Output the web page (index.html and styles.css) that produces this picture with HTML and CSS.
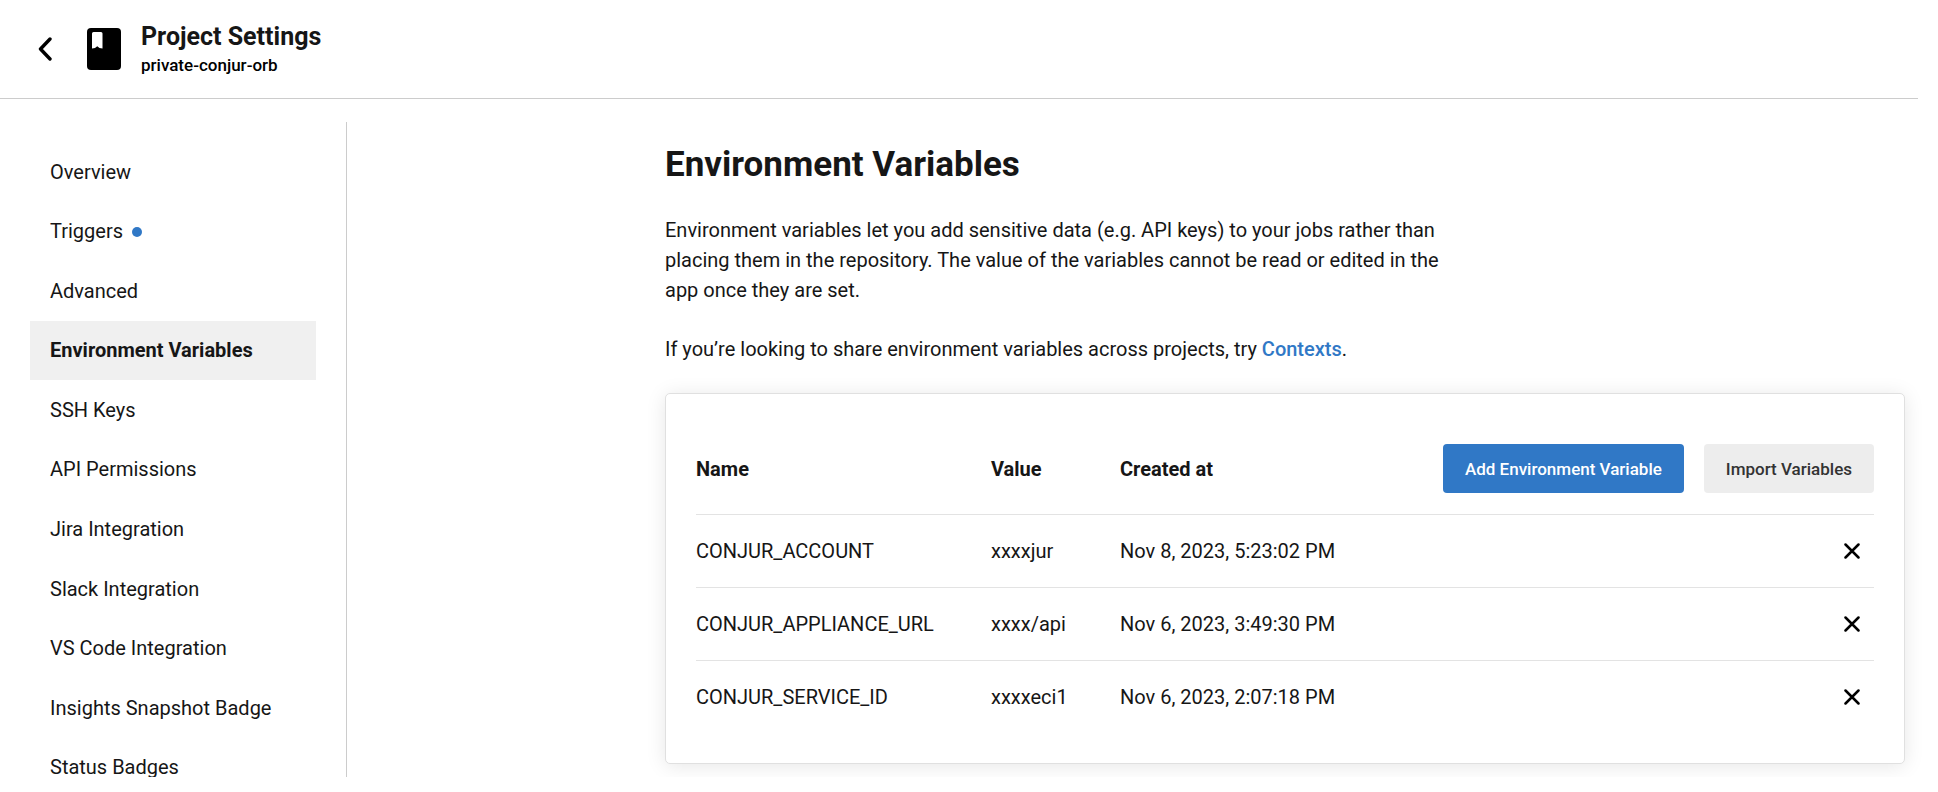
FILE: index.html
```html
<!DOCTYPE html>
<html lang="en">
<head>
<meta charset="utf-8">
<title>Project Settings</title>
<link rel="stylesheet" href="styles.css">
</head>
<body>
<div class="app">
  <header class="header">
    <button class="back" type="button" aria-label="Back">
      <svg viewBox="0 0 14 24" width="14" height="24" aria-hidden="true"><path d="M12 2 2.500 12 12 22" fill="none" stroke="currentColor" stroke-width="3.400" stroke-linecap="round" stroke-linejoin="round"/></svg>
    </button>
    <svg class="book" viewBox="0 0 34 42" width="34" height="42" aria-hidden="true"><rect width="34" height="42" rx="4"/><path d="M6.500 4H14q1.500 0 1.500 1.500V20.500L12.500 20 10.250 18.200 8 20 5 20.500V5.500Q5 4 6.500 4z" fill="#fff"/></svg>
    <div class="titles">
      <h1 class="title">Project Settings</h1>
      <p class="project">private-conjur-orb</p>
    </div>
  </header>
  <div class="body">
    <nav class="sidebar" aria-label="Project settings">
      <ul class="nav">
        <li><a class="nav-link" href="#">Overview</a></li>
        <li><a class="nav-link" href="#">Triggers<span class="dot"></span></a></li>
        <li><a class="nav-link" href="#">Advanced</a></li>
        <li><a class="nav-link nav-link-active" href="#" aria-current="page">Environment Variables</a></li>
        <li><a class="nav-link" href="#">SSH Keys</a></li>
        <li><a class="nav-link" href="#">API Permissions</a></li>
        <li><a class="nav-link" href="#">Jira Integration</a></li>
        <li><a class="nav-link" href="#">Slack Integration</a></li>
        <li><a class="nav-link" href="#">VS Code Integration</a></li>
        <li><a class="nav-link" href="#">Insights Snapshot Badge</a></li>
        <li><a class="nav-link" href="#">Status Badges</a></li>
      </ul>
    </nav>
    <main class="main">
      <h2 class="heading">Environment Variables</h2>
      <p class="text">Environment variables let you add sensitive data (e.g. API keys) to your jobs rather than placing them in the repository. The value of the variables cannot be read or edited in the app once they are set.</p>
      <p class="text">If you’re looking to share environment variables across projects, try <a class="link" href="#">Contexts</a>.</p>
      <section class="card">
        <table class="table">
          <colgroup><col class="col-name"><col class="col-value"><col><col class="col-actions"></colgroup>
          <thead>
            <tr>
              <th scope="col">Name</th>
              <th scope="col">Value</th>
              <th scope="col">Created at</th>
              <td><div class="actions"><button class="btn btn-primary" type="button">Add Environment Variable</button><button class="btn btn-secondary" type="button">Import Variables</button></div></td>
            </tr>
          </thead>
          <tbody>
            <tr><td>CONJUR_ACCOUNT</td><td>xxxxjur</td><td>Nov 8, 2023, 5:23:02 PM</td><td><button class="remove" type="button" aria-label="Remove CONJUR_ACCOUNT"><svg viewBox="0 0 16 16" width="16" height="16" aria-hidden="true"><path d="M1.500 1.500 14.500 14.500M14.500 1.500 1.500 14.500"/></svg></button></td></tr>
            <tr><td>CONJUR_APPLIANCE_URL</td><td>xxxx/api</td><td>Nov 6, 2023, 3:49:30 PM</td><td><button class="remove" type="button" aria-label="Remove CONJUR_APPLIANCE_URL"><svg viewBox="0 0 16 16" width="16" height="16" aria-hidden="true"><path d="M1.500 1.500 14.500 14.500M14.500 1.500 1.500 14.500"/></svg></button></td></tr>
            <tr><td>CONJUR_SERVICE_ID</td><td>xxxxeci1</td><td>Nov 6, 2023, 2:07:18 PM</td><td><button class="remove" type="button" aria-label="Remove CONJUR_SERVICE_ID"><svg viewBox="0 0 16 16" width="16" height="16" aria-hidden="true"><path d="M1.500 1.500 14.500 14.500M14.500 1.500 1.500 14.500"/></svg></button></td></tr>
          </tbody>
        </table>
      </section>
    </main>
  </div>
</div>
</body>
</html>
```
FILE: styles.css
```css
* {
  box-sizing: border-box;
}

body {
  margin: 0;
  background: #fff;
  color: #161616;
  font-family: Roboto, "Liberation Sans", sans-serif;
  font-size: 20px;
  line-height: 30px;
}

h1, h2, p, ul {
  margin: 0;
  padding: 0;
}

button {
  border: 0;
  background: none;
  font-family: inherit;
  cursor: pointer;
}

.app {
  display: flex;
  flex-direction: column;
  height: calc(100vh - 15px);
  margin-right: 20px;
}

.header {
  display: flex;
  align-items: center;
  flex: none;
  padding: 20px 32px;
  border-bottom: 1px solid #ccc;
}

.back {
  display: flex;
  padding: 0 6px;
  color: #000;
}

.book {
  margin-left: 29px;
}

.titles {
  margin-left: 20px;
  padding-top: 2px;
}

.title {
  font-size: 25px;
  line-height: 30px;
  font-weight: 700;
}

.project {
  color: #000;
  font-size: 17px;
  line-height: 26px;
  font-weight: 500;
}

.body {
  display: flex;
  flex: 1;
  min-height: 0;
  padding-top: 23px;
}

.sidebar {
  flex: none;
  width: 347px;
  padding: 20px 30px 0;
  border-right: 1px solid #ccc;
  overflow: hidden;
}

.nav {
  display: grid;
  grid-auto-rows: 1fr;
  min-height: 655px;
  list-style: none;
}

.nav-link {
  display: flex;
  align-items: center;
  height: 100%;
  padding: 0 20px;
  color: inherit;
  text-decoration: none;
}

.nav-link-active {
  background: #f0f0f0;
  font-weight: 700;
}

.dot {
  width: 10px;
  height: 10px;
  margin-top: 2px;
  margin-left: 9px;
  border-radius: 50%;
  background: #3078c6;
}

.main {
  flex: 1;
  padding: 20px 0 0 318px;
}

.heading {
  margin-bottom: 28px;
  font-size: 35px;
  line-height: 45px;
  font-weight: 700;
}

.text {
  max-width: 800px;
  margin-bottom: 29px;
}

.link {
  color: #3078c6;
  font-weight: 500;
  text-decoration: none;
}

.card {
  margin-right: 13px;
  padding: 30px;
  border: 1px solid #e0e0e0;
  border-radius: 5px;
  background: #fff;
  box-shadow: 0 2px 20px rgba(0, 0, 0, 0.1);
}

.table {
  width: 100%;
  border-collapse: collapse;
  table-layout: fixed;
}

.col-name {
  width: 295px;
}

.col-value {
  width: 129px;
}

.col-actions {
  width: 440px;
}

.table th,
.table td {
  padding: 0;
  text-align: left;
}

.table th {
  font-weight: 700;
}

.table thead tr {
  height: 90px;
}

.table tbody tr {
  height: 73px;
  border-top: 1px solid #e3e3e3;
}

.actions {
  display: flex;
  justify-content: flex-end;
  gap: 20px;
}

.btn {
  height: 49px;
  padding: 0 22px;
  border-radius: 4px;
  font-size: 17px;
  font-weight: 500;
  white-space: nowrap;
}

.btn-primary {
  background: #3078c6;
  color: #fff;
}

.btn-secondary {
  background: #ededed;
  color: #333;
}

.remove {
  display: flex;
  margin-left: auto;
  padding: 14px;
}

.remove path {
  fill: none;
  stroke: #000;
  stroke-width: 2.500;
  stroke-linecap: round;
}
```
